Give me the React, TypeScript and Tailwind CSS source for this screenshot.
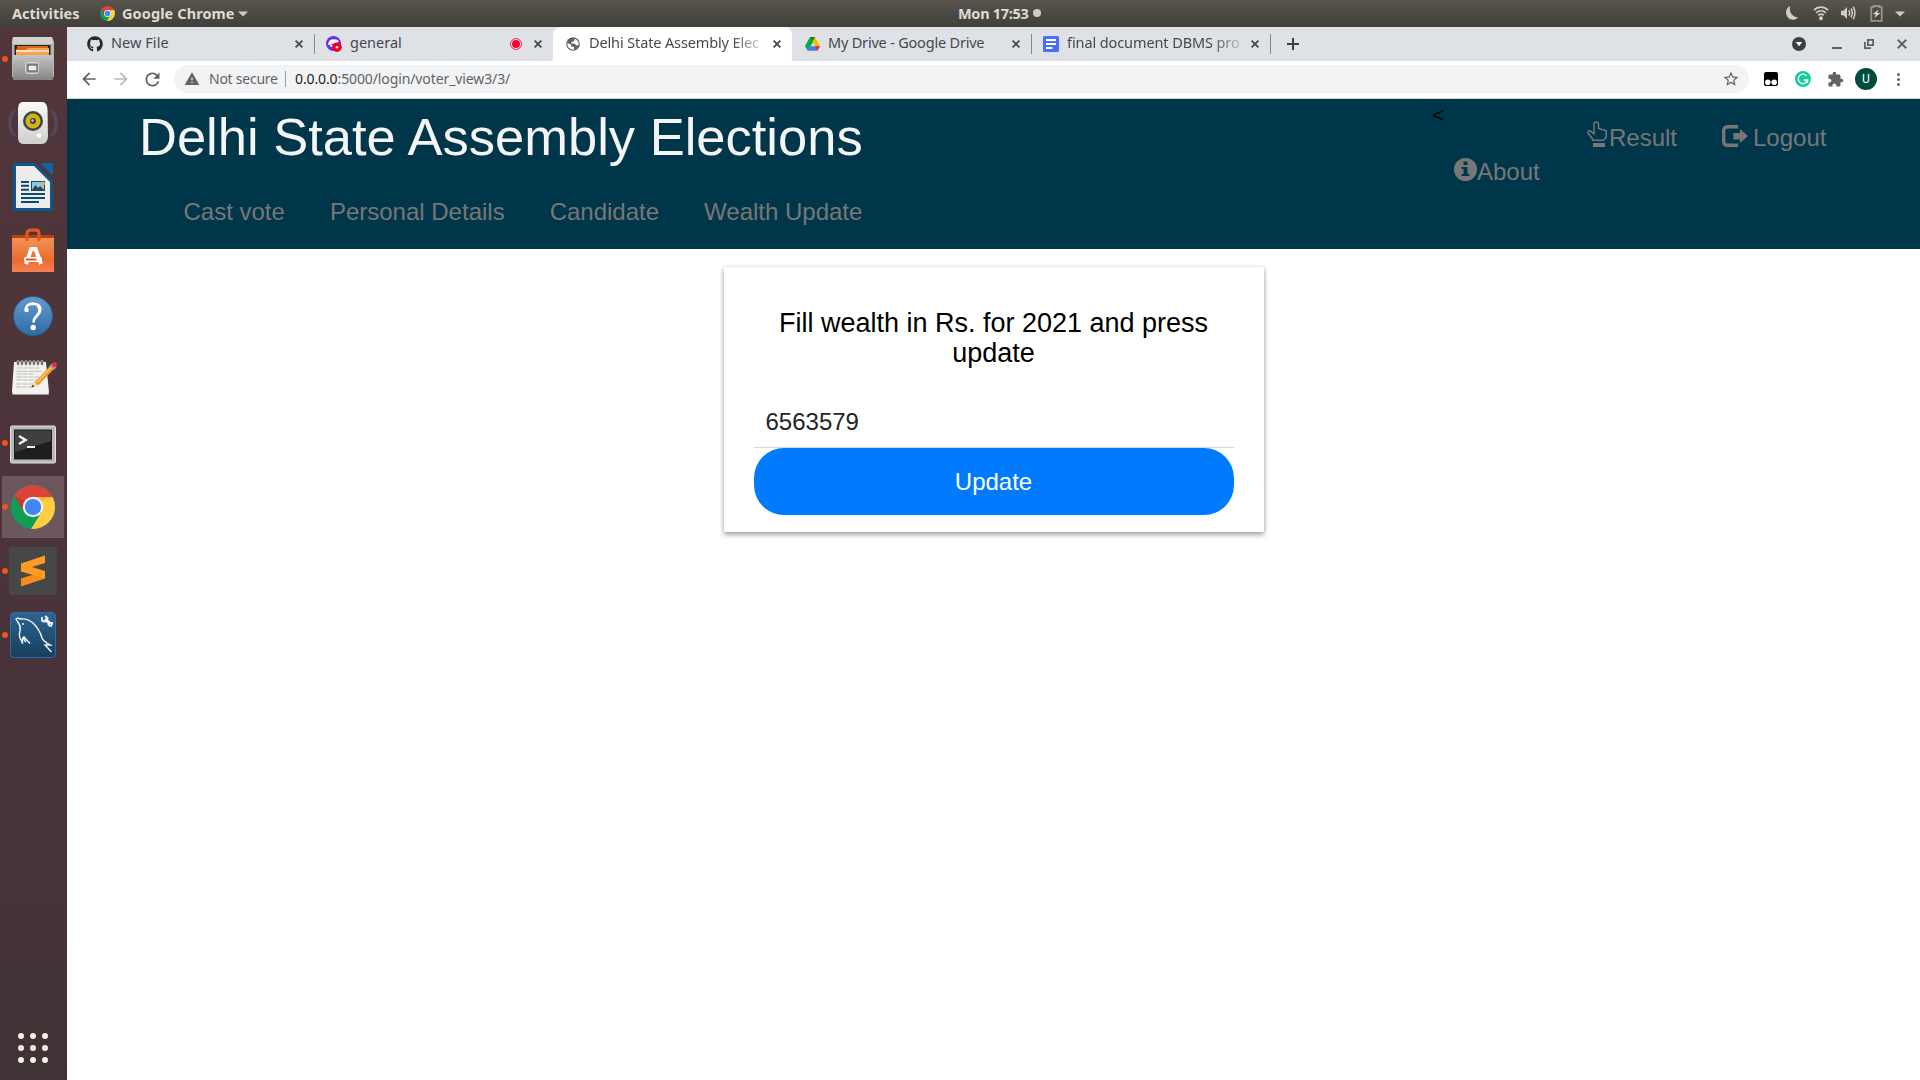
import React from "react";
import { FaGithub } from "react-icons/fa";
import { MdExtension, MdStarBorder, MdWarning, MdRefresh, MdArrowBack, MdArrowForward } from "react-icons/md";

function ChromeLogo({ size }: { size: number }) {
  return (
    <svg width={size} height={size} viewBox="0 0 44 44" className="block shrink-0">
      <defs>
        <clipPath id="disc">
          <circle cx="22" cy="22" r="22" />
        </clipPath>
      </defs>
      <g clipPath="url(#disc)">
        <rect width="44" height="44" fill="#0f9d58" />
        <path d="M22 12H44V44H20L30.7 27Z" fill="#ffcd40" />
        <path d="M0 0H44V12H22L13.3 27L2.9 10.5Z" fill="#db4437" />
        <path d="M3.5 11L13.3 27L14 16Z" fill="#b23427" opacity=".6" />
        <path d="M22 12H42L30 16Z" fill="#e0a92e" opacity=".5" />
      </g>
      <circle cx="22" cy="22" r="10.2" fill="#f1f1f1" />
      <circle cx="22" cy="22" r="8.1" fill="#4285f4" />
    </svg>
  );
}

function TopBar() {
  return (
    <div className="flex h-[27px] items-center bg-linear-to-b from-[#59554d] to-[#403f3a] font-['Noto_Sans','Open_Sans',sans-serif] text-[14.5px] font-bold text-[#dfdbd2]">
      <div className="-mt-px w-[88px] pl-3 leading-[26px] tracking-[0.02px]">Activities</div>
      <div className="flex w-[858px] items-center pl-3">
        <ChromeLogo size={15} />
        <span className="-mt-px ml-[7px] w-[116px] whitespace-nowrap leading-[26px] tracking-[0.1px]">Google Chrome</span>
        <svg width="10" height="6" className="block"><path d="M0 0.5H10L5 5.5Z" fill="#cfccc4" /></svg>
      </div>
      <div className="flex flex-1 items-center pl-3">
        <span className="-mt-px w-[75px] whitespace-nowrap leading-[25px] tracking-[-0.3px]">Mon 17:53</span>
        <div className="-mt-px size-2 rounded-full bg-[#d0cdc6]" />
      </div>
      <div className="flex items-center pr-[15px]">
        <svg width="14" height="16" viewBox="0 0 14 16" className="-mt-px mr-[14px]"><path d="M5 1C4 7 7 11.7 13 12.4C10 15.5 5 15.5 2.5 12C-.2 8 1 3.4 5 1Z" fill="#d0cdc6" /></svg>
        <svg width="16" height="16" viewBox="0 0 16 16" fill="none" stroke="#d0cdc6" strokeWidth="1.7" className="-mt-px mr-[11px]">
          <path d="M1 5.2C5 1.2 11 1.2 15 5.2M3.2 7.8C6 5.2 10 5.2 12.8 7.8M5.3 10.3C7 8.8 9 8.8 10.7 10.3" />
          <circle cx="8" cy="13.2" r="1.1" fill="#d0cdc6" />
        </svg>
        <svg width="16" height="16" viewBox="0 0 16 16" fill="none" stroke="#d0cdc6" strokeWidth="1.5" className="-mt-px mr-[14px]">
          <path d="M1 5.8H3.5L7 2V14L3.5 10.2H1Z" fill="#d0cdc6" stroke="none" />
          <path d="M8.8 5.3Q10.6 8 8.8 10.7M11 3.5Q13.6 8 11 12.5M13.2 1.6Q16.6 8 13.2 14.4" />
        </svg>
        <svg width="13" height="17" viewBox="0 0 13 17" className="-mt-px mr-[12px]">
          <path d="M3.5 2.2V1H9.5V2.2H11.7V15.8H1.3V2.2Z" fill="none" stroke="#96938c" strokeWidth="1.8" />
          <path d="M8.6 4.5L2.7 9.3H6L4.3 13.3L10.2 8H7.2Z" fill="#dcd9d2" />
        </svg>
        <svg width="10" height="6"><path d="M0 0.5H10L5 5.5Z" fill="#cfccc4" /></svg>
      </div>
    </div>
  );
}

const dockIcons: { name: string; running?: boolean; active?: boolean; art: React.ReactNode }[] = [
  {
    name: "Files",
    running: true,
    art: (
      <>
        <path d="M4 2H43L45 7V42H3V7Z" fill="#b4b4b3" />
        <path d="M4 2H43L44 9H3Z" fill="#d1d1d0" />
        <rect x="5.5" y="10" width="36" height="11" fill="#28241f" />
        <path d="M8 11H39V21H7V14H8Z" fill="#d8641c" />
        <path d="M7 15H17L19 13H40V21H7Z" fill="#f6a34f" />
        <path d="M7 16H40" stroke="#fff0d2" strokeWidth="1.3" />
        <rect x="4" y="20" width="40" height="25" rx="1" fill="url(#steel)" />
        <rect x="16.5" y="27.5" width="13" height="11" rx="2" fill="#a8a8a8" stroke="#d5d5d5" />
        <rect x="19" y="30" width="9" height="6" fill="#ececec" stroke="#4b4b4b" />
      </>
    ),
  },
  {
    name: "Rhythmbox",
    art: (
      <>
        <path d="M7 10Q-4 24 7 38M3 12Q-3 24 3 36M41 10Q52 24 41 38M45 12Q51 24 45 36" fill="none" stroke="#56628a" strokeWidth="1.5" opacity=".5" />
        <path d="M13 3H34Q38 4 38.5 10L39 38Q38 45 33 45H14Q9 45 9 38V10Q9 4 13 3Z" fill="url(#shell)" />
        <circle cx="24" cy="22" r="10" fill="#424448" />
        <circle cx="24" cy="22" r="7.5" fill="#d0b615" />
        <circle cx="24" cy="22" r="3" fill="#424448" />
        <circle cx="23.5" cy="21.5" r="1.2" fill="#ccc" />
        <circle cx="30" cy="36.5" r="3.3" fill="#f7f7f7" stroke="#c9c9c7" />
      </>
    ),
  },
  {
    name: "LibreOffice Writer",
    art: (
      <>
        <path d="M6 0H26L44 18V46Q44 48 42 48H6Q4 48 4 46V2Q4 0 6 0Z" fill="#0c588c" />
        <path d="M31 0H42Q44 0 44 2V13Z" fill="#0b67a3" />
        <path d="M7 3H25L41 19V45H7Z" fill="#eeedeb" />
        <path d="M12 19H20M12 22.8H20M12 26.7H20M12 31H36M12 35H36M12 39H30" stroke="#0b4a73" strokeWidth="2" />
        <rect x="22.5" y="18.5" width="13" height="9" fill="#8cc7ed" stroke="#0b4a73" />
        <path d="M23 27L26.5 22L29 25L31 23L35 27Z" fill="#404040" />
        <circle cx="34" cy="20.5" r="2" fill="#e5b833" />
      </>
    ),
  },
  {
    name: "Ubuntu Software",
    art: (
      <>
        <path d="M3 8H45V14H3Z" fill="#b5410f" />
        <path d="M3 11H45V45H3Z" fill="url(#bag)" />
        <path d="M18 14V7Q18 3.2 21 3.2H27Q30 3.2 30 7V14" fill="none" stroke="#e05a20" strokeWidth="3.2" />
        <path d="M17 37L22.2 22H26.5L32 37" fill="none" stroke="#fff" strokeWidth="4" />
        <rect x="15" y="30" width="18" height="5" rx="2" fill="#fff" />
        <rect x="17" y="31.5" width="10.5" height="2" fill="#e8571c" />
      </>
    ),
  },
  {
    name: "Help",
    art: (
      <>
        <circle cx="24" cy="25" r="19.5" fill="url(#help)" stroke="#2a5e92" />
        <path d="M17 20Q16 13 24 12.6Q32 13 31.3 19Q31 22 27.5 25.3Q24.6 28 24.6 31.5" fill="none" stroke="#fff" strokeWidth="2.6" />
        <path d="M28.5 14.5Q33 19 27.5 25" fill="none" stroke="#fff" strokeWidth="2.5" />
        <circle cx="17.6" cy="19" r="2.2" fill="#fff" />
        <circle cx="24.2" cy="36.5" r="2.7" fill="#fff" />
      </>
    ),
  },
  {
    name: "Text Editor",
    art: (
      <>
        <path d="M5 7H37L40 37Q40 39.5 37 39.5H4Q3 39 3 36Z" fill="#f2f2ef" />
        <path d="M3.5 39.5H40" stroke="#999" strokeWidth="1.2" />
        <path d="M8 13H30M7.5 16.3H33M7.5 19H25M7.5 22H31M7.5 25H28M7 29H26M7 32H23" stroke="#b5b5b2" strokeWidth=".9" strokeDasharray="5 1" />
        {[9, 13, 17, 21, 25, 29, 33].map((x) => (
          <ellipse key={x} cx={x} cy="8" rx="1.3" ry="2.5" fill="#4a4244" stroke="#dedddb" strokeWidth=".8" />
        ))}
        <path d="M26.5 26.5L41 11L44.5 14.5L29.5 30L22.5 32.5Z" fill="#f0972b" />
        <path d="M28 27.5L42 12.5" stroke="#ffc66b" strokeWidth="1.3" />
        <path d="M22.5 32.5L25 26.5L29 30.5Z" fill="#f0d5a8" />
        <path d="M22.5 32.5L23.5 29.8L25.2 31.6Z" fill="#222" />
        <path d="M40 11.5L43 8.5L47.5 12.5L44.5 15Z" fill="#a9a5a5" />
        <circle cx="45.4" cy="9.8" r="2.6" fill="#dd3b3e" />
      </>
    ),
  },
  {
    name: "Terminal",
    running: true,
    art: (
      <>
        <rect x="1.5" y="7" width="45" height="37" rx="1.5" fill="#b9b9b8" stroke="#e2e2e1" />
        <rect x="5" y="10.5" width="38" height="30" fill="#1d1f1e" />
        <path d="M6 11.5H42V22L6 33Z" fill="#fff" opacity=".15" />
        <path d="M10 17L16.5 21L10 25" fill="none" stroke="#f5f5f5" strokeWidth="2.6" />
        <path d="M18 28H26" stroke="#f5f5f5" strokeWidth="2" />
      </>
    ),
  },
  { name: "Google Chrome", running: true, active: true, art: null },
  {
    name: "Sublime Text",
    running: true,
    art: (
      <>
        <rect width="48" height="48" rx="3" fill="#464847" />
        <path d="M12 31.5L36 24V31.5L12 39.5Z" fill="#f78c1c" />
        <path d="M12 16.5L36 8.5V16L23 20L36 24V31.5L12 24.5Z" fill="#ff9b25" />
      </>
    ),
  },
  {
    name: "MySQL Workbench",
    running: true,
    art: (
      <>
        <rect x="1.5" y="1.5" width="45" height="45" rx="4" fill="url(#sql)" stroke="#2f70a4" />
        <path d="M17 31Q14 28 15 26Q13 26 13.5 31Q9 26 11 20Q12 16 10 13Q8 10 7 8Q8 6.5 12 8Q18 7 24 12Q31 19 33 27Q34 30 38 32L41.5 34L36 34L42.5 41M13.5 31Q13 33 12.8 31M15 26L21 32.5" fill="none" stroke="#eef6fb" strokeWidth="1.4" />
        <circle cx="14" cy="13" r=".9" fill="#fff" />
        <path d="M36 8L41.5 13" stroke="#eef4fa" strokeWidth="3.4" />
        <path d="M33 6V9.5Q35 11.5 37.5 9.5L38.5 7L36 5M39 13Q40 15 43 15M43 11V14" fill="none" stroke="#eef4fa" strokeWidth="2" />
      </>
    ),
  },
];

function Dock() {
  return (
    <div className="flex w-[67px] shrink-0 flex-col bg-linear-to-b from-[#51363a] via-[#49333a] via-60% to-[#403335]">
      <svg width="0" height="0" className="absolute">
        <defs>
          <linearGradient id="steel" x2="0" y2="1"><stop stopColor="#c5c5c4" /><stop offset="1" stopColor="#858585" /></linearGradient>
          <linearGradient id="shell" x2="0" y2="1"><stop stopColor="#fafaf9" /><stop offset="1" stopColor="#cfcfcd" /></linearGradient>
          <linearGradient id="bag" x2="0" y2="1"><stop stopColor="#f09355" /><stop offset=".65" stopColor="#ed6b2c" /><stop offset="1" stopColor="#f58154" /></linearGradient>
          <linearGradient id="help" x2="0" y2="1"><stop stopColor="#649bd0" /><stop offset="1" stopColor="#2e6ca2" /></linearGradient>
          <linearGradient id="sql" x2="0" y2="1"><stop stopColor="#2c6593" /><stop offset="1" stopColor="#183e5b" /></linearGradient>
        </defs>
      </svg>
      {dockIcons.map((d) => (
        <div key={d.name} className={d.active ? "flex h-16 w-full items-center bg-[linear-gradient(#6b575d,#6b575d)] bg-[length:62px_62px] bg-[position:2px_1px] bg-no-repeat" : "flex h-16 w-full items-center"}>
          <div className={d.running ? "ml-[2px] size-[6px] shrink-0 rounded-full bg-[#e95420]" : "ml-[2px] size-[6px] shrink-0"} />
          <div className={d.active ? "ml-[3px]" : "ml-px"}>
            {d.active ? <ChromeLogo size={44} /> : <svg width="48" height="48" viewBox="0 0 48 48" className="block overflow-visible">{d.art}</svg>}
          </div>
        </div>
      ))}
      <div className="mt-auto mb-[17px] ml-[18px] grid w-[30px] grid-cols-3 gap-[6px]">
        {Array.from({ length: 9 }, (_, i) => (
          <div key={i} className="size-[6px] rounded-full bg-[#f0eeeb]" />
        ))}
      </div>
    </div>
  );
}

function Cross({ size = 8, w = 1.8, color = "#45494d" }: { size?: number; w?: number; color?: string }) {
  return (
    <svg width={size} height={size} viewBox="0 0 8 8" className="block shrink-0">
      <path d="M.6 .6L7.4 7.4M7.4 .6L.6 7.4" stroke={color} strokeWidth={w} />
    </svg>
  );
}

function Tab({ icon, label, extra, active, sep, text }: { icon: React.ReactNode; label: string; extra?: React.ReactNode; active?: boolean; sep?: boolean; text: string }) {
  return (
    <div className={active ? "flex h-full w-[239px] items-center rounded-t-lg bg-white pl-3" : "flex h-full w-[239px] items-center pl-3"}>
      <div className="flex w-4 shrink-0 justify-center">{icon}</div>
      <div className={text}>{label}</div>
      {extra}
      <div className="mr-[11px] ml-auto"><Cross /></div>
      <div className={sep ? "-mr-px h-5 w-px bg-[#85888c]" : "-mr-px h-5 w-px"} />
    </div>
  );
}

function TabStrip() {
  return (
    <div className="flex h-[34px] items-center bg-[#dee1e6] pl-2 font-['Noto_Sans','Open_Sans',sans-serif] text-[14.5px] text-[#45494d]">
      <Tab sep icon={<FaGithub size={16} color="#24292e" />} label="New File" text="-mt-[2px] ml-2 w-[176px] whitespace-nowrap tracking-[0.05px]" />
      <Tab
        icon={
          <svg width="16" height="16" viewBox="0 0 16 16">
            <circle cx="7.5" cy="7.5" r="7.5" fill="#6a2cf5" />
            <path d="M3 9Q2.5 4 8 4Q12 4 12 6M5 7H11V10H5Z" fill="#fff" stroke="#fff" strokeWidth="1.5" />
            <path d="M5.5 8.5H9" stroke="#6a2cf5" strokeWidth="1.5" />
            <circle cx="11" cy="11.2" r="4.8" fill="#f20022" />
            <circle cx="11" cy="11.2" r="1.3" fill="#fff" />
          </svg>
        }
        label="general"
        text="-mt-[2px] ml-2 w-[160px] whitespace-nowrap tracking-[0px]"
        extra={
          <svg width="12" height="12" viewBox="0 0 12 12" className="shrink-0">
            <circle cx="6" cy="6" r="5.4" fill="#fff" stroke="#f5153c" />
            <circle cx="6" cy="6" r="4" fill="#f20032" />
          </svg>
        }
      />
      <Tab
        active
        icon={
          <svg width="14" height="14" viewBox="0 0 14 14">
            <circle cx="7" cy="7" r="6.8" fill="#5f6368" />
            <path d="M1.4 6L5.2 7.6V9.4L8 10V12.6Q3 13 1.5 8.5ZM6 1.8L8.8 1.9L8 4.2L5.5 5V6.6L9 6.8L10 8.6L12.5 8Q13 4 9.5 2Z" fill="#fff" />
          </svg>
        }
        label="Delhi State Assembly Elec"
        text="-mt-[2px] ml-2 w-[176px] whitespace-nowrap tracking-[-0.13px] [mask-image:linear-gradient(to_right,black_143px,transparent_180px)]"
      />
      <Tab
        sep
        icon={
          <svg width="15" height="14" viewBox="0 0 15 14">
            <path d="M5 0H7.5L8.6 4.4L2.6 13.5L0 9.3Z" fill="#00ac47" />
            <path d="M5 0H10L15 9H10L7.5 4.6Z" fill="#ffba00" />
            <path d="M5 0H10L7.5 4.6Z" fill="#00832d" />
            <path d="M2.6 13.8L5 9.2H15L12.4 13.8Z" fill="#4478f0" />
            <path d="M10 9.2H15L12.4 13.8Z" fill="#ea3335" />
          </svg>
        }
        label="My Drive - Google Drive"
        text="-mt-[2px] ml-2 w-[176px] whitespace-nowrap tracking-[-0.2px]"
      />
      <Tab
        sep
        icon={
          <svg width="16" height="16" viewBox="0 0 16 16">
            <rect width="16" height="16" rx="1.5" fill="#4a6cf7" />
            <path d="M3 4H13M3 8H13M3 12H9.5" stroke="#fff" strokeWidth="2" />
          </svg>
        }
        label="final document DBMS pro"
        text="-mt-[2px] ml-2 w-[176px] whitespace-nowrap tracking-[-0.1px] [mask-image:linear-gradient(to_right,black_143px,transparent_182px)]"
      />
      <svg width="12" height="12" viewBox="0 0 12 12" className="ml-[17px]"><path d="M6 0V12M0 6H12" stroke="#3c4043" strokeWidth="2" /></svg>
      <div className="mr-[13px] ml-auto flex items-center">
        <svg width="14" height="14" viewBox="0 0 14 14"><circle cx="7" cy="7" r="7" fill="#3c4043" /><path d="M3.8 5H10.2L7 9.2Z" fill="#fff" /></svg>
        <div className="mt-2 ml-[26px] h-[2px] w-[10px] bg-[#5f6368]" />
        <svg width="10" height="10" viewBox="0 0 10 10" className="ml-[22px]" fill="none" stroke="#5f6368" strokeWidth="1.8"><path d="M3.9 .9H9.1V6.1H3.9ZM.9 3V9.1H7" /></svg>
        <div className="ml-[23px]"><Cross size={10} w={1.5} color="#5f6368" /></div>
      </div>
    </div>
  );
}

function Toolbar() {
  return (
    <div className="flex h-[38px] items-center border-b border-[#d5d7da] bg-white pr-5 pb-px pl-3 font-['Noto_Sans','Open_Sans',sans-serif] text-[14px] text-[#5f6368]">
      <MdArrowBack size={20} className="shrink-0" />
      <MdArrowForward size={20} color="#b9bbbe" className="ml-3 shrink-0" />
      <MdRefresh size={21} className="mr-[11px] ml-[11px] shrink-0" />
      <div className="flex h-7 flex-1 items-center rounded-full bg-[#f1f3f4] pl-[10px]">
        <MdWarning size={16} />
        <span className="-mt-px ml-[9px] w-[76px] whitespace-nowrap tracking-[-0.25px]">Not secure</span>
        <div className="h-4 w-px bg-[#9b9ea2]" />
        <span className="-mt-px ml-[9px] flex-1 whitespace-nowrap tracking-[-0.11px]"><span className="text-[#202124]">0.0.0.0</span>:5000/login/voter_view3/3/</span>
        <MdStarBorder size={18} className="mr-[9px]" />
      </div>
      <svg width="14" height="14" viewBox="0 0 14 14" className="ml-[15px]"><rect width="14" height="14" rx="2" fill="#000" /><circle cx="3.8" cy="10.3" r="2.8" fill="#fff" /><circle cx="10.2" cy="10.3" r="2.8" fill="#fff" /></svg>
      <svg width="16" height="16" viewBox="0 0 16 16" className="ml-[17px]"><circle cx="8" cy="8" r="8" fill="#11cf9b" /><path d="M11.5 4.7A4.7 4.7 0 1 0 12.6 9H8.8M12.6 8.5V12" fill="none" stroke="#fff" strokeWidth="1.3" /></svg>
      <MdExtension size={17} className="ml-[16px]" />
      <div className="ml-[11px] flex size-[22px] items-center justify-center rounded-full bg-[#004d40] font-['Roboto'] text-[12px] text-white">U</div>
      <div className="ml-[20px] flex flex-col gap-[2px]">
        <div className="size-[3px] rounded-full bg-[#5f6368]" />
        <div className="size-[3px] rounded-full bg-[#5f6368]" />
        <div className="size-[3px] rounded-full bg-[#5f6368]" />
      </div>
    </div>
  );
}

function SiteHeader() {
  return (
    <header className="flex h-[150px] bg-[#00364a] text-[24px] leading-[34px] text-[#777]">
      <div className="w-[1365px] pt-[8px] pl-[72px]">
        <h1 className="h-[60px] text-[52.5px] leading-[60px] whitespace-nowrap text-[#f5f5f5]">Delhi State Assembly Elections</h1>
        <nav className="flex gap-[45px] pt-[28px] pl-[44.5px] whitespace-nowrap">
          <a>Cast vote</a>
          <a>Personal Details</a>
          <a>Candidate</a>
          <a>Wealth Update</a>
        </nav>
      </div>
      <div className="w-[155px]">
        <div className="h-[56px] pt-[1px] text-[21px] leading-[30px] text-black">&lt;</div>
        <a className="flex pl-[22px] whitespace-nowrap">
          <svg width="23" height="23" viewBox="0 0 23 23" className="mt-[2.5px] shrink-0">
            <circle cx="11.5" cy="11.5" r="11.5" fill="#777" />
            <path d="M9.5 3.5H13.5V7H9.5ZM7.5 9H13.5V16H15.5V18H7.5V16H9.5V11H7.5Z" fill="#00364a" />
          </svg>
          About
        </a>
      </div>
      <a className="flex w-[135px] pt-[22px] whitespace-nowrap">
        <svg width="20" height="27" viewBox="0 0 20 27" className="mr-[2px] shrink-0">
          <path d="M5.5 19.2V17.8L.9 12Q.7 9.8 3 9.8L7 12.8V3Q7 .9 9 .9Q11.5 .9 11.5 3V7.5L19.2 9.8V16.5L16.5 19.2Z" fill="none" stroke="#777" strokeWidth="1.5" />
          <rect x="6" y="22" width="12" height="4" fill="#777" />
        </svg>
        Result
      </a>
      <a className="flex pt-[22px] whitespace-nowrap">
        <svg width="26" height="22" viewBox="0 0 26 22" className="mt-[4px] mr-[5px] shrink-0">
          <path d="M16 1.7H6Q1.7 1.7 1.7 6V16Q1.7 20.3 6 20.3H16" fill="none" stroke="#777" strokeWidth="3.4" />
          <path d="M11.5 8H18V4L26 11L18 18V14.5H11.5Z" fill="#777" />
        </svg>
        Logout
      </a>
    </header>
  );
}

function WealthForm() {
  return (
    <form className="mx-auto mt-[18px] h-[265px] w-[540px] bg-white px-[30px] pt-[42px] shadow-[0_3px_5px_rgba(0,0,0,0.32),0_0_4px_rgba(0,0,0,0.14)]">
      <h2 className="h-[89px] text-center text-[27px] leading-[29.5px] text-black">Fill wealth in Rs. for 2021 and press update</h2>
      <div className="flex h-[50px] items-center border-b border-[#d4d5d8] pb-px pl-3 text-[24px] text-[#212529]">6563579</div>
      <button type="button" className="flex h-[67px] w-full items-center justify-center rounded-[30px] bg-[#007bff] text-[24px] text-white">Update</button>
    </form>
  );
}

export default function App() {
  return (
    <div className="flex h-[1080px] w-[1920px] flex-col overflow-hidden bg-white">
      <TopBar />
      <div className="flex min-h-0 flex-1">
        <Dock />
        <div className="flex min-w-0 flex-1 flex-col bg-white">
          <TabStrip />
          <Toolbar />
          <main className="flex-1 font-['Liberation_Sans',Arial,sans-serif]">
            <SiteHeader />
            <WealthForm />
          </main>
        </div>
      </div>
    </div>
  );
}
